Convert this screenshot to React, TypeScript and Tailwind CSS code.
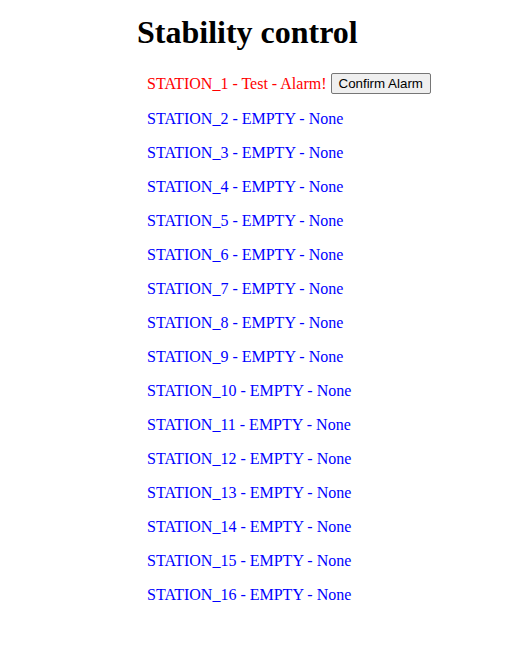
import React from "react";

const stations = Array.from({ length: 15 }, (_, i) => `STATION_${i + 2} - EMPTY - None`);

export default function App() {
  return (
    <div className="min-h-[661px] bg-white pl-[137px] pt-[14px]" style={{ fontFamily: '"Liberation Serif", "Times New Roman", serif' }}>
      <h1 className="m-0 text-[32px] font-bold leading-[37px] text-black">Stability control</h1>
      <div className="pl-[10px] pt-[22px]">
        <div className="flex h-[21px] items-center text-[16px] text-[#ff0000]">
          <span>STATION_1 - Test - Alarm!</span>
          <button
            className="ml-[4px] h-[21px] rounded-[2px] border border-[#767676] bg-[#efefef] px-[7px] text-[13.33px] leading-[17px] text-black"
            style={{ fontFamily: '"Liberation Sans", Arial, sans-serif' }}
          >
            Confirm Alarm
          </button>
        </div>
        {stations.map((s) => (
          <div key={s} className="mt-[16px] h-[18px] text-[16px] leading-[18px] text-[#0000ff]">
            {s}
          </div>
        ))}
      </div>
    </div>
  );
}
